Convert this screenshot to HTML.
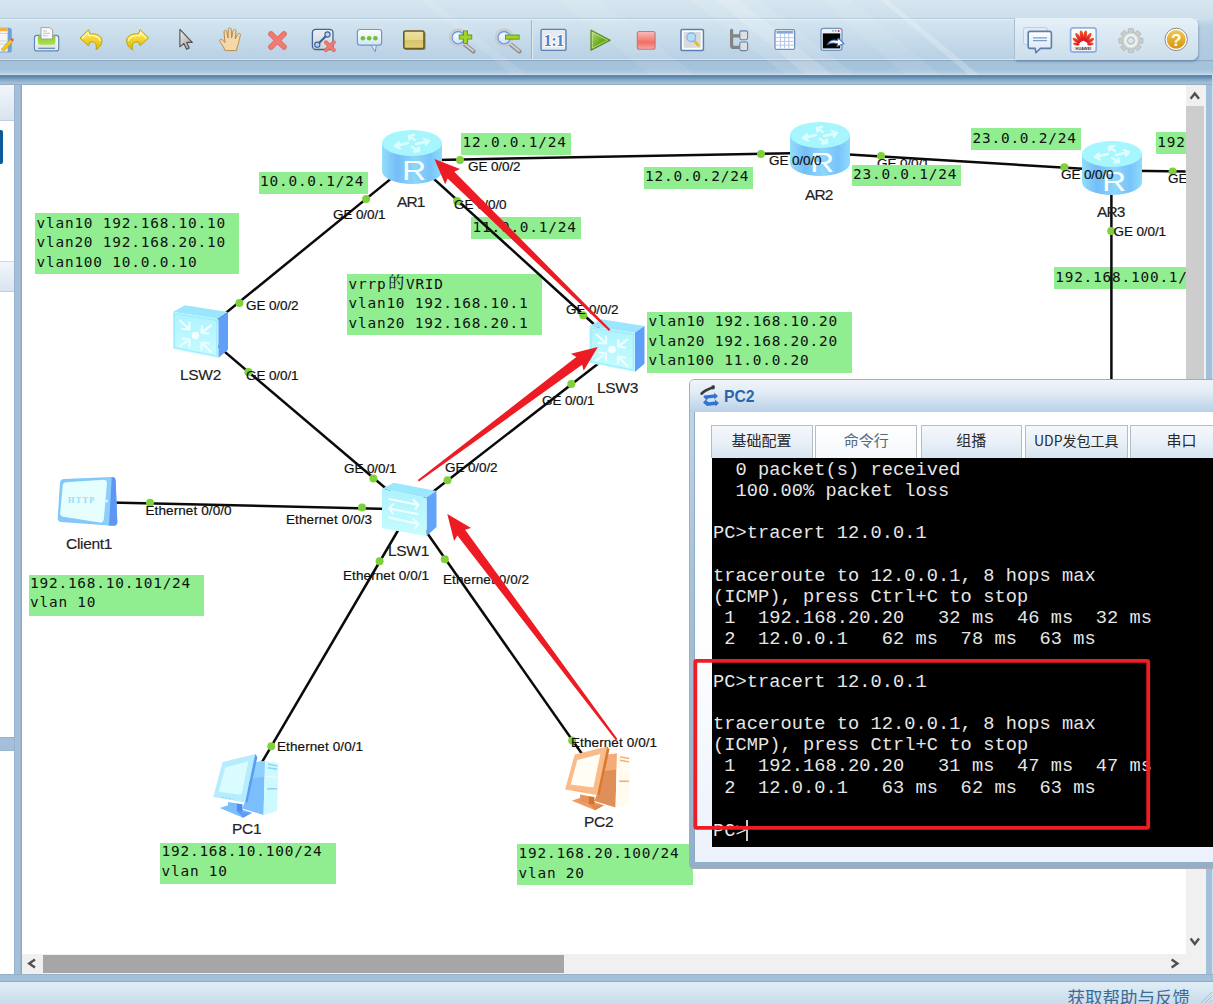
<!DOCTYPE html>
<html lang="zh-CN">
<head>
<meta charset="utf-8">
<title>eNSP</title>
<style>
html,body{margin:0;padding:0;}
body{width:1213px;height:1004px;position:relative;overflow:hidden;background:#c9dcea;font-family:"Liberation Sans","Noto Sans CJK SC",sans-serif;}
.abs{position:absolute;}
/* chrome */
#top0{left:0;top:0;width:1213px;height:60px;background:linear-gradient(#d6e6f0 0,#cddfeb 18px,#b6cfe3 26px,#adc9e0 60px);}
#tb{left:0;top:18px;width:1199px;height:42px;border-radius:0 7px 7px 0;background:linear-gradient(#d4e5ef,#c6dbea 50%,#b8d0e4);border-top:1px solid #b5c9da;box-sizing:border-box;}
#tbhl{left:0;top:19px;width:1198px;height:1px;background:#e6f0f7;}
#tbbl{left:0;top:58.6px;width:1196px;height:1px;background:#d6e4f0;}
#band1{left:0;top:59.6px;width:1213px;height:15.4px;background:linear-gradient(#90aac3 0,#90aac3 1px,#a5c2db 1.6px,#a6c3dc 60%,#b2cbe1 85%,#cfdfed 100%);}
#band2{left:0;top:75px;width:1212px;height:10px;background:linear-gradient(#66859f 0,#5b84a7 12%,#6793b8 28%,#8aabc9 52%,#a0bcd7 75%,#a3bfd9 90%,#8c9fb2 100%);}
#rgroup{left:1015px;top:18px;width:183px;height:42px;background:linear-gradient(#e6f0f7,#cbdeeb);border-radius:0 7px 7px 0;box-shadow:1px 2px 2px rgba(80,115,150,.5);}
#rsep{left:1014px;top:19px;width:1px;height:40px;background:#a9bfd2;}
#sep1{left:531px;top:20px;width:1px;height:39px;background:#9db3c7;box-shadow:1px 0 0 #dfeaf3;}
#frameL{left:14px;top:85px;width:8px;height:896px;background:linear-gradient(90deg,#93abc6 0,#a3bfd9 1.5px,#a3bfd9 6px,#8fa3ba 7.6px,#c9d2dc 8px);}
#frameR{left:1205px;top:85px;width:8px;height:896px;background:linear-gradient(90deg,#8d9fb0 0,#8d9fb0 .8px,#a3bfd9 1.5px,#a3bfd9 7px,#cfdfec 7px);}
#frameB{left:0;top:973.6px;width:1213px;height:8px;background:linear-gradient(#93a7bd 0,#a3bfd9 1.2px,#a3bfd9 6.6px,#9ca8b2 6.8px,#9ca8b2 8px);}
#status{left:0;top:981.6px;width:1213px;height:23px;background:linear-gradient(#e2eef7,#c6dbeb);}
#stxt{left:1067.5px;top:986.5px;font-size:17.5px;line-height:22px;color:#3f6a95;white-space:nowrap;}
#canvas{left:22px;top:85px;width:1164px;height:869.5px;background:#fff;}
#hs{left:22px;top:954.2px;width:1183.6px;height:19.5px;background:#f0f0f0;}
#hthumb{left:43px;top:954.7px;width:521px;height:18px;background:#a6a6a6;}
#vs{left:1185.6px;top:85px;width:20px;height:869.2px;background:#f0f0f0;}
#vthumb{left:1186px;top:106px;width:18px;height:400px;background:#cdcdcd;}
.lp{left:0;width:14px;}
/* topo */
.note{position:absolute;background:#90ee90;color:#111;font-family:"DejaVu Sans Mono","Liberation Mono",monospace;font-size:14.4px;line-height:19.4px;white-space:pre;padding:0 0 0 1.5px;box-sizing:border-box;letter-spacing:0.81px;}
.note i{font-style:normal;position:relative;top:.7px;}
.pl{position:absolute;margin-top:.7px;-webkit-text-stroke:.2px #111;font-size:13.5px;line-height:16px;color:#111;white-space:nowrap;letter-spacing:-0.1px;}
.pl.e{letter-spacing:0.1px;}
.dl{position:absolute;-webkit-text-stroke:.15px #222;font-size:15.5px;line-height:18px;color:#222;white-space:nowrap;letter-spacing:-0.3px;}
/* pc2 window */
#win{left:689px;top:379px;width:540px;height:489.5px;background:linear-gradient(#c6d8ea 0,#a9c1d9 40%,#93afc8 100%);border:1px solid #a9adb3;border-radius:5px 0 0 4px;box-sizing:border-box;}
#wtitle{left:0;top:0;width:540px;height:32px;background:linear-gradient(#f0f4fa 0,#e2ebf5 40%,#c3d7ec 85%,#bad0e8 100%);border-radius:4px 0 0 0;}
#wttxt{left:34px;top:7px;font-weight:bold;font-size:17px;line-height:20px;color:#2d64ae;transform:scaleX(.925);transform-origin:0 0;}
#wbody{left:5px;top:32px;width:540px;height:449.5px;background:linear-gradient(#ffffff 0,#fdfeff 50%,#ecf1fc 100%);box-shadow:-1px 0 0 #8ea9c4;}
.tab{position:absolute;top:44.7px;height:33.5px;box-sizing:border-box;border:1px solid #b4bcc8;border-bottom:none;background:linear-gradient(#f5f8fc 0,#e9f0f8 50%,#d8e4f2 100%);font-size:15px;line-height:28.5px;text-align:center;color:#2a2a2a;font-family:"Noto Sans CJK SC","Liberation Sans",sans-serif;}
.tab.act{background:linear-gradient(#ffffff,#f4f7fb);color:#55687c;}
#term{left:21.5px;top:78px;width:520px;height:388.5px;background:#000;color:#e6e6e6;font-family:"Liberation Mono",monospace;font-size:18.67px;line-height:21.2px;letter-spacing:0.06px;white-space:pre;overflow:hidden;}
#term div{position:absolute;left:1.5px;top:1.5px;}
</style>
</head>
<body>
<div id="top0" class="abs"></div>
<div id="tb" class="abs"></div>
<div id="tbhl" class="abs"></div>
<div id="tbbl" class="abs"></div>
<div id="band1" class="abs"></div>
<div id="band2" class="abs"></div>
<div id="rgroup" class="abs"></div>
<div id="rsep" class="abs"></div>
<div id="sep1" class="abs"></div>
<svg class="abs" style="left:0;top:0" width="1213" height="75" viewBox="0 0 1213 75"><g fill="#fff">
<polygon points="690,0 760,0 855,75 785,75" opacity=".10"/>
<polygon points="716,0 738,0 833,75 806,75" opacity=".16"/>
<polygon points="820,0 850,0 940,75 905,75" opacity=".08"/>
<polygon points="881,0 888,0 979,75 969,75" opacity=".22"/>
<polygon points="420,0 432,0 527,75 512,75" opacity=".10"/>
<polygon points="560,0 600,0 695,75 650,75" opacity=".08"/>
</g></svg>
<!-- left panel -->
<div class="abs lp" style="top:85px;height:888.5px;background:#fff;"></div>
<div class="abs lp" style="top:84.6px;height:35px;background:linear-gradient(#f2f6fb,#d9e4f0);border-radius:0 3px 0 0;box-shadow:0 1px 0 #c3cfdc;"></div>
<div class="abs" style="left:0;top:129.5px;width:2.6px;height:34px;background:#0a5a9c;border-radius:0 2px 2px 0;"></div>
<div class="abs lp" style="top:262px;height:28.5px;background:linear-gradient(#f2f6fb,#d9e4f0);box-shadow:0 1px 0 #c3cfdc,0 -1px 0 #d0d9e4;"></div>
<div class="abs lp" style="top:736.6px;height:14.3px;background:linear-gradient(#8fa6c0 0,#a3bfd9 1.3px,#a3bfd9 13px,#8fa6c0 14.3px);"></div>
<div id="frameL" class="abs"></div>
<div id="frameR" class="abs"></div>
<div id="canvas" class="abs"></div>
<div id="hs" class="abs"></div>
<div id="hthumb" class="abs"></div>
<div id="vs" class="abs"></div>
<div id="vthumb" class="abs"></div>
<div id="frameB" class="abs"></div>
<div id="status" class="abs"></div>
<div id="stxt" class="abs">获取帮助与反馈</div>
<svg class="abs" style="left:0;top:0" width="1213" height="1004" viewBox="0 0 1213 1004">
<!-- scrollbar arrows -->
<path d="M35 959.6 L29.2 963.6 L35 967.6" fill="none" stroke="#505050" stroke-width="2.4"/>
<path d="M1171.6 959.6 L1177.4 963.6 L1171.6 967.6" fill="none" stroke="#505050" stroke-width="2.4"/>
<path d="M1190.6 98.8 L1194.8 93.4 L1199 98.8" fill="none" stroke="#505050" stroke-width="2.4"/>
<path d="M1190.6 938.6 L1194.8 944 L1199 938.6" fill="none" stroke="#505050" stroke-width="2.4"/>
<path d="M1201 1003 L1212 992 M1205 1003 L1212 996 M1209 1003 L1212 1000" stroke="#aabccc" stroke-width="1"/>
</svg>
<svg class="abs" style="left:0;top:0" width="1213" height="90" viewBox="0 0 1213 90">
<defs>
<linearGradient id="gY" x1="0" x2="0" y1="0" y2="1"><stop offset="0" stop-color="#fff48a"/><stop offset=".5" stop-color="#f2d42a"/><stop offset="1" stop-color="#d9b608"/></linearGradient>
<linearGradient id="gG" x1="0" x2="0" y1="0" y2="1"><stop offset="0" stop-color="#8cc832"/><stop offset="1" stop-color="#a8e24c"/></linearGradient>
<linearGradient id="gCur" x1="0" x2="1" y1="0" y2="1"><stop offset="0" stop-color="#f2f2f2"/><stop offset="1" stop-color="#9a9a9a"/></linearGradient>
<linearGradient id="gRed" x1="0" x2="0" y1="0" y2="1"><stop offset="0" stop-color="#f9bcbc"/><stop offset=".62" stop-color="#f07062"/><stop offset="1" stop-color="#f5a8a4"/></linearGradient>
<linearGradient id="gPlay" x1="0" x2="1" y1="0" y2="1"><stop offset="0" stop-color="#b9e27a"/><stop offset=".55" stop-color="#6aa820"/><stop offset="1" stop-color="#4e9408"/></linearGradient>
<linearGradient id="gBub" x1="0" x2="0" y1="0" y2="1"><stop offset="0" stop-color="#ffffff"/><stop offset="1" stop-color="#d4e4fa"/></linearGradient>
<linearGradient id="gGray" x1="0" x2="0" y1="0" y2="1"><stop offset="0" stop-color="#eceef2"/><stop offset="1" stop-color="#cfd3da"/></linearGradient>
<linearGradient id="gTan" x1="0" x2="0" y1="0" y2="1"><stop offset="0" stop-color="#eee0a0"/><stop offset=".5" stop-color="#e6d58a"/><stop offset=".5" stop-color="#d8c466"/><stop offset="1" stop-color="#e0cf80"/></linearGradient>
<linearGradient id="gGold" x1="0" x2="0" y1="0" y2="1"><stop offset="0" stop-color="#f2c65a"/><stop offset="1" stop-color="#d6960a"/></linearGradient>
<radialGradient id="gLens" cx=".4" cy=".35" r=".7"><stop offset="0" stop-color="#f4f8fe"/><stop offset="1" stop-color="#c4d8f0"/></radialGradient>
<linearGradient id="gHw" x1="0" x2="0" y1="0" y2="1"><stop offset="0" stop-color="#f5572a"/><stop offset="1" stop-color="#d4101c"/></linearGradient>
</defs>
<!-- icon0 notepad w/ pencil (cut) -->
<path d="M-2 27.8 H9 Q11.8 27.8 11.8 30.5 V50 Q11.8 52.6 9 52.6 H-2 Z" fill="#6fa0dc"/>
<path d="M-2 28.5 H7.6 V51.5 H-2 Z" fill="#f4f6f8"/>
<rect x="-2" y="28" width="9.6" height="3.2" fill="#f5b041"/>
<path d="M-2 33.5 H7.5 M-2 41 H7.5 M-2 44 H7.5" stroke="#c9d3de" stroke-width="1"/>
<path d="M10.2 39.4 L12.9 41.4 L4 51.3 L1.3 49.2 Z" fill="#f2c81e" stroke="#c79a10" stroke-width=".6"/>
<path d="M10.2 39.4 L11.4 38.3 Q12.6 37.9 13.4 39 L13.6 40.2 L12.9 41.4 Z" fill="#e05a5a"/>
<path d="M1.3 49.2 L4 51.3 L0.6 52 Z" fill="#e9c9a0"/>
<!-- printer -->
<rect x="34.5" y="35.3" width="24.2" height="15.6" rx="2.5" fill="#f3f4f6" stroke="#5f86b8" stroke-width="1.2"/>
<rect x="36" y="44.5" width="21.2" height="5.6" rx="1" fill="#e2e5ea"/>
<path d="M38.3 48.3 H55" stroke="#6a8fba" stroke-width="1.3"/>
<rect x="37.8" y="34.8" width="17.6" height="10" rx="2.5" fill="url(#gG)"/>
<path d="M41 27.6 H49.8 L52.6 30.2 V39 H41 Z" fill="#fafafa" stroke="#9a9a9a" stroke-width=".9"/>
<path d="M43 31 H47 M43 33.3 H50 M43 35.8 H47.5" stroke="#bbb" stroke-width=".9"/>
<!-- undo / redo -->
<path id="undo" d="M80 38 L88.5 29.6 L90.2 34 C96 33.3 101.6 35.5 102 40.6 C102.1 45.2 98.6 48 96 49.9 C96.6 46.2 96.6 43.2 93.6 42.1 L90 41.8 L88.5 45.8 Z" fill="url(#gY)" stroke="#c2a200" stroke-width="1" stroke-linejoin="round"/>
<path id="undoh" d="M82.6 38 L88 32.6 L89 35.6 C94 35 99.4 36.6 100 40.4" fill="none" stroke="#fffbd0" stroke-width="1.3" stroke-linecap="round" stroke-linejoin="round" opacity=".9"/>
<use href="#undo" transform="translate(228.6 0) scale(-1 1)"/>
<use href="#undoh" transform="translate(228.6 0) scale(-1 1)"/>
<!-- cursor -->
<path d="M179.9 29.3 L179.9 46.8 L183.9 43.4 L186.6 49.2 L189.3 48 L186.7 42.4 L192.3 42.4 Z" fill="url(#gCur)" stroke="#4f4f4f" stroke-width="1.1" stroke-linejoin="round"/>
<!-- hand -->
<path d="M225 50.6 C224 47 221.5 44 219.8 41.5 C219 39.6 221 38.6 222.6 40 L225 42.6 L224 32 C223.9 30 226.4 29.8 226.8 31.8 L228 38 L228.3 29.4 C228.4 27.4 231.1 27.4 231.2 29.4 L231.6 38 L233.2 30.6 C233.7 28.8 236.2 29.2 236 31.2 L235.2 39 L237.8 34.2 C238.8 32.6 241 33.6 240.4 35.4 C239 40 238.6 44 237.2 47 L236.6 50.6 Z" fill="#f6d8a6" stroke="#b48c54" stroke-width="1" stroke-linejoin="round"/>
<!-- red X -->
<g stroke-linecap="round">
<path d="M271 34 L284 47 M284 34 L271 47" stroke="#d86a64" stroke-width="5.6"/>
<path d="M271 34 L284 47 M284 34 L271 47" stroke="#f27a72" stroke-width="4"/>
</g>
<!-- link delete -->
<rect x="312.4" y="29.3" width="20.6" height="20.2" rx="3.5" fill="url(#gGray)" stroke="#3f6698" stroke-width="1.3"/>
<path d="M317.3 44.7 L327.5 34.5" stroke="#3d628f" stroke-width="2.2"/>
<circle cx="317.3" cy="44.7" r="2.6" fill="#b6d2fb" stroke="#3d628f" stroke-width="1.1"/>
<circle cx="327.5" cy="34.5" r="2.6" fill="#b6d2fb" stroke="#3d628f" stroke-width="1.1"/>
<g stroke-linecap="round">
<path d="M326 42.4 L333.8 50.2 M333.8 42.4 L326 50.2" stroke="#d06860" stroke-width="4"/>
<path d="M326 42.4 L333.8 50.2 M333.8 42.4 L326 50.2" stroke="#f07a70" stroke-width="2.8"/>
</g>
<!-- speech bubble -->
<path d="M370.6 44.6 L375.3 51.8 L376.4 44.6 Z" fill="#e4eefb" stroke="#6f97c7" stroke-width="1"/>
<rect x="357.4" y="29.5" width="24.2" height="15.6" rx="2.6" fill="url(#gBub)" stroke="#6f97c7" stroke-width="1.2"/>
<circle cx="362.9" cy="38.2" r="2.3" fill="#6ec22e"/><circle cx="369.2" cy="38.2" r="2.3" fill="#6ec22e"/><circle cx="375.4" cy="38.2" r="2.3" fill="#6ec22e"/>
<!-- tan rectangle -->
<rect x="405" y="32" width="20.6" height="18" rx="1.5" fill="#6b5a20" opacity=".55"/>
<rect x="403.8" y="31" width="20.2" height="17.6" rx="1.5" fill="url(#gTan)" stroke="#6b5a20" stroke-width="1.6"/>
<!-- zoom in -->
<g id="mag">
<path d="M465 44.6 L473.4 51.4" stroke="#8e8e8e" stroke-width="4.4" stroke-linecap="round"/>
<path d="M465 44.2 L473 50.8" stroke="#cfcfcf" stroke-width="2" stroke-linecap="round"/>
<circle cx="458.2" cy="37.7" r="8.3" fill="url(#gLens)" stroke="#c9cbce" stroke-width="2.2"/>
<circle cx="458.2" cy="37.7" r="6.2" fill="none" stroke="#6b9bd8" stroke-width="1.4"/>
</g>
<path d="M465.5 30.4 V43.8 M458.8 37.1 H472.2" stroke="#5f9212" stroke-width="5"/>
<path d="M465.5 31.2 V43 M459.6 37.1 H471.4" stroke="#a2d428" stroke-width="3.2"/>
<!-- zoom out -->
<use href="#mag" x="45.9"/>
<path d="M505 37.1 H519.6" stroke="#5f9212" stroke-width="5"/>
<path d="M505.8 37.1 H518.8" stroke="#a2d428" stroke-width="3.2"/>
<!-- 1:1 -->
<rect x="541" y="29.4" width="25" height="21" rx="1.5" fill="#e6e9ee" stroke="#5a82b2" stroke-width="1.4"/>
<text x="553.6" y="46" text-anchor="middle" font-family="Liberation Serif,serif" font-weight="bold" font-size="16.5" fill="#4a86cf" stroke="#ffffff" stroke-width="2.2" paint-order="stroke" letter-spacing="-.6">1:1</text>
<!-- play -->
<path d="M591 30.2 L610.2 40.2 L591 50.3 Z" fill="url(#gPlay)" stroke="#5a8a22" stroke-width="1.2" stroke-linejoin="round"/>
<path d="M592.4 32.4 L607.6 40.2 L592.4 48.1 Z" fill="none" stroke="#c6e896" stroke-width=".9" stroke-linejoin="round" opacity=".8"/>
<!-- stop -->
<rect x="637.3" y="31.5" width="17.8" height="17.8" rx="2" fill="url(#gRed)" stroke="#c47878" stroke-width="1.1"/>
<!-- capture -->
<rect x="681" y="29.4" width="22.4" height="21" rx="1.2" fill="#ffffff" stroke="#5b7fae" stroke-width="1.5"/>
<rect x="683.6" y="32" width="17.2" height="15.8" fill="#d9dadc"/>
<path d="M694 40.6 L698.4 45.4" stroke="#dcbc34" stroke-width="2.6" stroke-linecap="round"/>
<circle cx="691.3" cy="37.3" r="4.4" fill="#b4dcfb" stroke="#7ab4e8" stroke-width="1.2"/>
<!-- tree -->
<path d="M731.6 30.4 V45.4 Q731.6 47.4 733.8 47.4 H740 M731.6 35.9 H740" stroke="#838383" stroke-width="3.2" fill="none" stroke-linecap="round"/>
<rect x="739.8" y="30.9" width="7.8" height="8.8" rx="1.6" fill="#e0e0e0" stroke="#6282aa" stroke-width="1.1"/>
<rect x="739.8" y="42" width="7.8" height="8.6" rx="1.6" fill="#e0e0e0" stroke="#6282aa" stroke-width="1.1"/>
<!-- table -->
<rect x="775" y="29.6" width="19.6" height="19.8" rx="1.5" fill="#ffffff" stroke="#6f8fbc" stroke-width="1.3"/>
<rect x="776.4" y="31" width="16.8" height="2.6" fill="#86a4d4"/>
<path d="M776 37.6 H793.6 M776 41.4 H793.6 M776 45.2 H793.6 M780.4 34 V48.6 M784.6 34 V48.6 M788.8 34 V48.6" stroke="#b4c8e6" stroke-width="1"/>
<!-- terminal -->
<rect x="821" y="28.3" width="21" height="22" rx="2.4" fill="#eef3fa" stroke="#7096c6" stroke-width="1.3"/>
<rect x="822.8" y="33.4" width="17.4" height="15" fill="#050505"/>
<circle cx="838.6" cy="30.9" r="1" fill="#e82020"/><circle cx="835.6" cy="30.9" r=".8" fill="#888"/><circle cx="833" cy="30.9" r=".8" fill="#888"/>
<path d="M827.6 44.4 C829 40.6 833.4 39 837.2 40.6 L838.4 38.2 L844 43.6 L837 46.4 L837.6 43.8 C834.4 42.6 830.6 43 827.6 44.4 Z" fill="#ffffff" stroke="#3f74c0" stroke-width="1.1" stroke-linejoin="round"/>
<!-- chat -->
<rect x="1023.4" y="27.6" width="24" height="16.8" rx="2" fill="#e2ecf8" stroke="#b9cde6" stroke-width="1"/>
<path d="M1030.2 31.4 H1049.4 Q1051.4 31.4 1051.4 33.4 V46.4 Q1051.4 48.4 1049.4 48.4 H1040.4 L1035.9 52.8 L1035.2 48.4 H1030.2 Q1028.2 48.4 1028.2 46.4 V33.4 Q1028.2 31.4 1030.2 31.4 Z" fill="url(#gBub)" stroke="#5c7fa8" stroke-width="1.6" stroke-linejoin="round"/>
<path d="M1033 37.8 H1047 M1033 40.6 H1047" stroke="#7a9cc8" stroke-width="1.3"/>
<!-- huawei -->
<rect x="1070.6" y="27.8" width="25.6" height="24.2" rx="2.6" fill="#fbfbfb" stroke="#8fb4e2" stroke-width="1.8"/>
<rect x="1072.4" y="46.8" width="22" height="4" fill="#ececec"/>
<g transform="translate(1083.4 45.3)" fill="url(#gHw)">
<ellipse cx="0" cy="-9.6" rx="1.75" ry="5.4" transform="rotate(-10)"/>
<ellipse cx="0" cy="-9.6" rx="1.75" ry="5.4" transform="rotate(10)"/>
<ellipse cx="0" cy="-9.2" rx="1.75" ry="5.2" transform="rotate(-32)"/>
<ellipse cx="0" cy="-9.2" rx="1.75" ry="5.2" transform="rotate(32)"/>
<ellipse cx="0" cy="-8.4" rx="1.60" ry="4.4" transform="rotate(-56)"/>
<ellipse cx="0" cy="-8.4" rx="1.60" ry="4.4" transform="rotate(56)"/>
<ellipse cx="0" cy="-7.2" rx="1.35" ry="3.2" transform="rotate(-80)"/>
<ellipse cx="0" cy="-7.2" rx="1.35" ry="3.2" transform="rotate(80)"/>
</g>
<text x="1083.4" y="50.2" text-anchor="middle" font-family="Liberation Sans,sans-serif" font-weight="bold" font-size="3.6" fill="#333" letter-spacing=".2">HUAWEI</text>
<!-- gear -->
<g transform="translate(1130.9 40.6)">
<g fill="#c9cecc" stroke="#a9b1af" stroke-width=".7">
<rect x="-2.7" y="-12" width="5.4" height="24" rx="1"/>
<rect x="-2.7" y="-12" width="5.4" height="24" rx="1" transform="rotate(45)"/>
<rect x="-2.7" y="-12" width="5.4" height="24" rx="1" transform="rotate(90)"/>
<rect x="-2.7" y="-12" width="5.4" height="24" rx="1" transform="rotate(135)"/>
</g>
<circle r="8.6" fill="#d2d7d5" stroke="#b4bbb9" stroke-width=".7"/>
<circle r="5.6" fill="none" stroke="#eef1f0" stroke-width="2.4"/>
<circle r="3.3" fill="#dbe8f2" stroke="#aab2b0" stroke-width=".8"/>
</g>
<!-- help -->
<circle cx="1176.2" cy="39.4" r="11.2" fill="#ffffff" stroke="#8a8a8a" stroke-width="1"/>
<circle cx="1176.2" cy="39.4" r="9.4" fill="url(#gGold)"/>
<text x="1176.3" y="45.6" text-anchor="middle" font-family="Liberation Sans,sans-serif" font-weight="bold" font-size="17" fill="#ffffff">?</text>
</svg>
<!-- notes below lines -->
<div class="note" style="left:35px;top:213px;width:204px;height:61px;"><i>vlan10 192.168.10.10
vlan20 192.168.20.10
vlan100 10.0.0.10</i></div>
<div class="note" style="left:258.5px;top:171.5px;width:109.5px;height:22px;"><i>10.0.0.1/24</i></div>
<div class="note" style="left:461px;top:133.2px;width:110px;height:21.5px;"><i style="top:0px">12.0.0.1/24</i></div>
<div class="note" style="left:471px;top:217px;width:109.5px;height:21.5px;"><i>11.0.0.1/24</i></div>
<div class="note" style="left:643.5px;top:167px;width:109.5px;height:21.5px;"><i style="top:0px">12.0.0.2/24</i></div>
<div class="note" style="left:971px;top:128px;width:109.5px;height:21.5px;"><i>23.0.0.2/24</i></div>
<div class="note" style="left:1155.7px;top:132px;width:30px;height:21.5px;overflow:hidden;"><i>192.168</i></div>
<div class="note" style="left:1053.7px;top:267.2px;width:132px;height:21.5px;overflow:hidden;"><i>192.168.100.1/24</i></div>
<div class="note" style="left:347px;top:274px;width:195px;height:61px;"><i>vrrp<span style="font-family:'Noto Serif CJK SC','Noto Sans CJK SC',serif;font-size:16px;line-height:0;display:inline-block;width:19.5px;text-align:center;letter-spacing:0;position:relative;top:-1.2px;">的</span>VRID
vlan10 192.168.10.1
vlan20 192.168.20.1</i></div>
<div class="note" style="left:647px;top:312.3px;width:204.5px;height:60.5px;"><i style="top:-0.2px">vlan10 192.168.10.20
vlan20 192.168.20.20
vlan100 11.0.0.20</i></div>
<div class="note" style="left:28.5px;top:575px;width:175.5px;height:40.5px;"><i style="top:-1.0px">192.168.10.101/24
vlan 10</i></div>
<div class="note" style="left:160px;top:842.5px;width:176px;height:41px;"><i style="top:-0.3px">192.168.10.100/24
vlan 10</i></div>
<div class="note" style="left:517px;top:843.5px;width:176px;height:41px;"><i>192.168.20.100/24
vlan 20</i></div>

<svg class="abs" style="left:0;top:0" width="1213" height="1004" viewBox="0 0 1213 1004">
<defs>
<linearGradient id="rb" x1="0" x2="1" y1="0" y2="0">
<stop offset="0" stop-color="#92defb"/><stop offset=".25" stop-color="#74bdf9"/><stop offset=".55" stop-color="#8dd6fb"/><stop offset=".8" stop-color="#78c3fa"/><stop offset="1" stop-color="#8edcfb"/>
</linearGradient>
<linearGradient id="ff" x1="0" x2="0" y1="0" y2="1"><stop offset="0" stop-color="#aef2fd"/><stop offset="1" stop-color="#c6fcff"/></linearGradient>
<g id="router">
<path d="M0 13 L0 41 A30 13 0 0 0 60 41 L60 13 Z" fill="url(#rb)"/>
<ellipse cx="30" cy="13" rx="30" ry="13" fill="#a8f6fd"/>
<g fill="none" stroke="#eaffff" stroke-width="2.4" stroke-linecap="round" stroke-linejoin="round" opacity=".82">
<path d="M13 16 L26 13 M13 16 L17 12.5 M13 16 L18 18.5"/>
<path d="M47 11 L34 14 M47 11 L42 9 M47 11 L44 14.5"/>
<path d="M27 6 L33 10 M27 6 L32 5 M27 6 L27.5 9.5"/>
<path d="M37 21 L30 17 M37 21 L32 21.5 M37 21 L36.5 17.5"/>
</g>
<text x="32" y="49.6" font-family="Liberation Sans,sans-serif" font-size="27.5" fill="#f4feff" text-anchor="middle" transform="translate(32 0) scale(1.22 1) translate(-32 0)">R</text>
</g>
<g id="sw3">
<polygon points="0,7 12,0.2 55,7 45.3,13.8" fill="#9be6fc"/>
<polygon points="45.3,13.8 55,7 55,44.7 45.3,53" fill="#5f9ff9"/>
<polygon points="0,7 45.3,13.8 45.3,53 0,44" fill="url(#ff)"/>
<polygon points="1.5,9 43.8,15.3 43.8,51 1.5,42.6" fill="none" stroke="#a0ebfc" stroke-width="1.2"/>
<g stroke="#ecffff" stroke-width="2.2" fill="none" stroke-linecap="round">
<path d="M7 15.5 L16.5 24.5 M16.5 24.5 L9.5 24 M16.5 24.5 L16.5 17.5"/>
<path d="M38 20.5 L28.5 27.5 M28.5 27.5 L29 21 M28.5 27.5 L35.5 28.5"/>
<path d="M7 41 L16.5 34.5 M16.5 34.5 L9.5 33.5 M16.5 34.5 L16.5 41.5"/>
<path d="M38 47 L28.5 37.5 M28.5 37.5 L28.5 44.5 M28.5 37.5 L35.5 38.5"/>
</g>
<circle cx="22.5" cy="30.5" r="3.8" fill="#f3ffff"/>
</g>
<g id="sw2">
<polygon points="1,6.7 12.9,0.7 55.5,9.1 45.6,15.9" fill="#9be8fc"/>
<polygon points="45.6,15.9 55.5,9.1 55.5,45 45.6,54.1" fill="#62a4fb"/>
<polygon points="1,6.7 45.6,15.9 45.6,54.1 1,46.2" fill="url(#ff)"/>
<g stroke="#f0ffff" stroke-width="1.8" fill="none" stroke-linecap="round" stroke-linejoin="round">
<path d="M8 17 L37.5 23 M32.5 18 L37.5 23 L34.5 27"/>
<path d="M36.5 32 L8 26.5 M12.5 22 L8 26.5 L12 31.5"/>
<path d="M8 35.5 L37.5 42 M32.5 37 L37.5 42 L34 46"/>
</g>
</g>
</defs>
<!-- links -->
<g stroke="#0a0a0a" stroke-width="2.5" fill="none" stroke-linecap="butt">
<line x1="413.5" y1="160.4" x2="820" y2="152.7"/>
<line x1="820" y1="152.7" x2="1112" y2="170.5"/>
<line x1="1112" y1="170.5" x2="1185.6" y2="171.6"/>
<line x1="1111.4" y1="171" x2="1111.4" y2="400"/>
<line x1="413.5" y1="160.4" x2="201.9" y2="332.4"/>
<line x1="413.5" y1="160.4" x2="619.3" y2="347.2"/>
<line x1="201.9" y1="332.4" x2="410.4" y2="509.3"/>
<line x1="619.3" y1="347.2" x2="410.4" y2="509.3"/>
<line x1="87.5" y1="501.9" x2="410.4" y2="509.4"/>
<line x1="410.6" y1="509" x2="247.4" y2="787"/>
<line x1="410.3" y1="509" x2="600.3" y2="780"/>
</g>
<!-- dots -->
<g fill="#7fd13b">
<circle cx="460" cy="160" r="4"/><circle cx="761" cy="154" r="4"/>
<circle cx="881" cy="156" r="4"/><circle cx="1064.4" cy="167.3" r="4"/>
<circle cx="1172.6" cy="171.6" r="4"/><circle cx="1111.2" cy="231.1" r="4"/>
<circle cx="366.1" cy="199.1" r="4"/><circle cx="239.4" cy="303" r="4"/>
<circle cx="457.1" cy="201.1" r="4"/><circle cx="583.2" cy="315.3" r="4"/>
<circle cx="248.4" cy="371.9" r="4"/><circle cx="373.4" cy="478.6" r="4"/>
<circle cx="571.3" cy="384.1" r="4"/><circle cx="447.5" cy="480.2" r="4"/>
<circle cx="150" cy="502.8" r="4"/><circle cx="362" cy="507.5" r="4"/>
<circle cx="379.6" cy="561.2" r="4"/><circle cx="271.3" cy="746.3" r="4"/>
<circle cx="444.8" cy="559.3" r="4"/><circle cx="572.2" cy="740.4" r="4"/>
</g>
<!-- devices -->
<use href="#router" x="382" y="130"/>
<use href="#router" x="790" y="122"/>
<use href="#router" x="1082" y="141"/>
<use href="#sw3" x="173" y="305"/>
<use href="#sw3" x="589.5" y="319"/>
<use href="#sw2" x="381" y="482"/>
<!-- client -->
<svg x="48" y="467" width="80" height="80" viewBox="0 0 1004 1004">
<path d="M200 150 L800 125 Q845 125 848 170 L870 690 Q870 740 820 738 L160 690 Q120 685 122 640 L150 200 Q155 152 200 150 Z" fill="#84c8fa"/>
<path d="M790 128 L830 128 Q848 135 850 175 L870 690 Q868 735 820 738 L760 733 Z" fill="#5d97f3"/>
<path d="M720 140 L800 128 L765 735 L690 720 Z" fill="#8ccffb"/>
<path d="M225 190 L700 160 Q742 162 740 205 L700 660 Q692 705 650 698 L190 625 Q150 615 153 575 L185 230 Q190 192 225 190 Z" fill="#e6fefe"/>
<rect x="718" y="412" width="32" height="32" fill="#d8f6ff"/>
<text x="425" y="448" font-family="Liberation Serif,serif" font-weight="bold" font-size="104" fill="#96dcfb" text-anchor="middle" letter-spacing="16">HTTP</text>
</svg>
<!-- PC1 -->
<svg x="205" y="745" width="80" height="80" viewBox="0 0 1004 1004">
<polygon points="640,215 752,198 735,878 468,796 500,715" fill="#7cbefb"/>
<polygon points="640,215 752,198 748,400 600,420" fill="#8fd0fc"/>
<polygon points="752,198 922,230 905,830 735,878" fill="#cdfaff"/>
<path d="M790 242 L905 262 M790 285 L905 305 M780 548 L903 548" stroke="#8fd0fc" stroke-width="18"/>
<path d="M760 395 L920 405" stroke="#e8ffff" stroke-width="14"/>
<polygon points="185,792 300,752 590,850 478,912" fill="#7cbefb"/>
<polygon points="290,715 410,735 410,832 290,800" fill="#7cbefb"/>
<polygon points="400,735 470,745 470,852 400,832" fill="#4f8df6"/>
<polygon points="400,832 590,850 478,912" fill="#5e9cf8"/>
<polygon points="222,212 632,112 512,722 102,652" fill="#b4edfd"/>
<polygon points="630,113 658,150 532,722 505,718" fill="#5b9bf7"/>
<polygon points="255,282 545,205 457,625 172,588" fill="#dbfcff"/>
<path d="M210 655 L350 680" stroke="#8fd0fc" stroke-width="10" stroke-dasharray="30 14"/>
</svg>
<!-- PC2 -->
<svg x="557" y="737.6" width="80" height="80" viewBox="0 0 1004 1004">
<polygon points="640,215 752,198 735,878 468,796 500,715" fill="#e18f58"/>
<polygon points="640,215 752,198 748,400 600,420" fill="#f5ab78"/>
<polygon points="752,198 922,230 905,830 735,878" fill="#fffbee"/>
<path d="M790 242 L905 262 M790 285 L905 305 M780 548 L903 548" stroke="#f5ab78" stroke-width="18"/>
<path d="M760 395 L920 405" stroke="#fff" stroke-width="14"/>
<polygon points="185,792 300,752 590,850 478,912" fill="#ee9c66"/>
<polygon points="290,715 410,735 410,832 290,800" fill="#e8935c"/>
<polygon points="400,735 470,745 470,852 400,832" fill="#d47428"/>
<polygon points="400,832 590,850 478,912" fill="#e08a4e"/>
<polygon points="222,212 632,112 512,722 102,652" fill="#fabb8b"/>
<polygon points="630,113 658,150 532,722 505,718" fill="#d9792f"/>
<polygon points="255,282 545,205 457,625 172,588" fill="#fffdf4"/>
<path d="M210 655 L350 680" stroke="#f0a472" stroke-width="10" stroke-dasharray="30 14"/>
</svg>
</svg>
<!-- port labels -->
<div class="pl" style="left:468px;top:158.6px;">GE 0/0/2</div>
<div class="pl" style="left:769px;top:152px;">GE 0/0/0</div>
<div class="pl" style="left:877px;top:155px;">GE 0/0/1</div>
<div class="pl" style="left:1061px;top:166.2px;">GE 0/0/0</div>
<div class="pl" style="left:1168px;top:170px;width:18px;overflow:hidden;">GE 0/0/2</div>
<div class="pl" style="left:1113.5px;top:223px;">GE 0/0/1</div>
<div class="pl" style="left:333px;top:206.2px;">GE 0/0/1</div>
<div class="pl" style="left:454px;top:196px;">GE 0/0/0</div>
<div class="pl" style="left:246px;top:297px;">GE 0/0/2</div>
<div class="pl" style="left:566px;top:301px;">GE 0/0/2</div>
<div class="pl" style="left:246px;top:367px;">GE 0/0/1</div>
<div class="pl" style="left:542px;top:392px;">GE 0/0/1</div>
<div class="pl" style="left:344px;top:460.4px;">GE 0/0/1</div>
<div class="pl" style="left:445px;top:459.2px;">GE 0/0/2</div>
<div class="pl e" style="left:145.5px;top:502.2px;">Ethernet 0/0/0</div>
<div class="pl e" style="left:286px;top:511px;">Ethernet 0/0/3</div>
<div class="pl e" style="left:343px;top:567px;">Ethernet 0/0/1</div>
<div class="pl e" style="left:443px;top:571.5px;">Ethernet 0/0/2</div>
<div class="pl e" style="left:277px;top:738px;">Ethernet 0/0/1</div>
<div class="pl e" style="left:571px;top:734px;">Ethernet 0/0/1</div>
<!-- device labels -->
<div class="dl" style="left:397px;top:193px;letter-spacing:-0.9px;">AR1</div>
<div class="dl" style="left:805px;top:186px;letter-spacing:-0.9px;">AR2</div>
<div class="dl" style="left:1097px;top:203px;letter-spacing:-0.9px;">AR3</div>
<div class="dl" style="left:180px;top:366px;">LSW2</div>
<div class="dl" style="left:597px;top:379px;">LSW3</div>
<div class="dl" style="left:388px;top:542px;">LSW1</div>
<div class="dl" style="left:66px;top:534.5px;">Client1</div>
<div class="dl" style="left:232px;top:820px;">PC1</div>
<div class="dl" style="left:584px;top:813px;">PC2</div>
<div class="note" style="left:851.5px;top:165px;width:109px;height:21px;"><i style="top:-0.3px">23.0.0.1/24</i></div>
<!-- red arrows -->
<svg class="abs" style="left:0;top:0" width="1213" height="1004" viewBox="0 0 1213 1004">
<g fill="#ed1c24">
<polygon points="617.4,739.0 465.1,529.8 471.1,528.1 447.3,514.1 454.1,540.9 457.4,535.5 615.8,740.2"/>
<polygon points="419.0,481.6 582.1,364.8 583.7,370.8 597.8,347.1 571.0,353.8 576.3,357.1 417.8,480.0"/>
<polygon points="610.4,329.6 454.3,171.7 460.0,169.1 434.4,158.9 445.2,184.3 447.6,178.6 609.0,331.0"/>
</g>
</svg>
<div id="win" class="abs">
<div id="wtitle" class="abs"></div>
<div id="wbody" class="abs"></div>
<svg class="abs" style="left:10px;top:4px" width="22" height="25" viewBox="0 0 22 25">
<path d="M1.6 9.6 C4 6.6 8.6 5 13.4 3.2" fill="none" stroke="#3a3a3a" stroke-width="2.6" stroke-linecap="round"/>
<path d="M11.6 1.6 L14.4 1.2 L14.6 5 L12 5.6 Z" fill="#3a3a3a"/>
<path d="M4 11.6 L14 10.4 L14 8.8 L18 12 L14.4 15.4 L14.4 13.8 L8 14.6 L6.4 16.6 L8.6 18.2 L15 17.4 L15 15.8 L19 19 L15.4 22.6 L15.4 21 L7 22 L3 18.6 L6 15.4 L3.4 13 Z" fill="#2f74d4"/>
</svg>
<div id="wttxt" class="abs">PC2</div>
<div class="tab" style="left:20.5px;width:102px;">基础配置</div>
<div class="tab act" style="left:125.3px;width:102px;">命令行</div>
<div class="tab" style="left:230.6px;width:101.5px;">组播</div>
<div class="tab" style="left:335px;width:102.5px;font-size:14px;">UDP发包工具</div>
<div class="tab" style="left:440.4px;width:102px;">串口</div>
<div id="term" class="abs"><div>  0 packet(s) received
  100.00% packet loss

PC&gt;tracert 12.0.0.1

traceroute to 12.0.0.1, 8 hops max
(ICMP), press Ctrl+C to stop
 1  192.168.20.20   32 ms  46 ms  32 ms
 2  12.0.0.1   62 ms  78 ms  63 ms

PC&gt;tracert 12.0.0.1

traceroute to 12.0.0.1, 8 hops max
(ICMP), press Ctrl+C to stop
 1  192.168.20.20   31 ms  47 ms  47 ms
 2  12.0.0.1   63 ms  62 ms  63 ms

PC&gt;<span style="margin-left:-1px;display:inline-block;width:2px;height:21px;background:#c8c8c8;vertical-align:-5px;"></span></div></div>
</div>
<!-- red rectangle -->
<svg class="abs" style="left:0;top:0" width="1213" height="1004" viewBox="0 0 1213 1004"><rect x="695.3" y="660.9" width="452.9" height="166.9" rx="1.2" fill="none" stroke="#ee1c25" stroke-width="3.8"/></svg>
</body>
</html>
